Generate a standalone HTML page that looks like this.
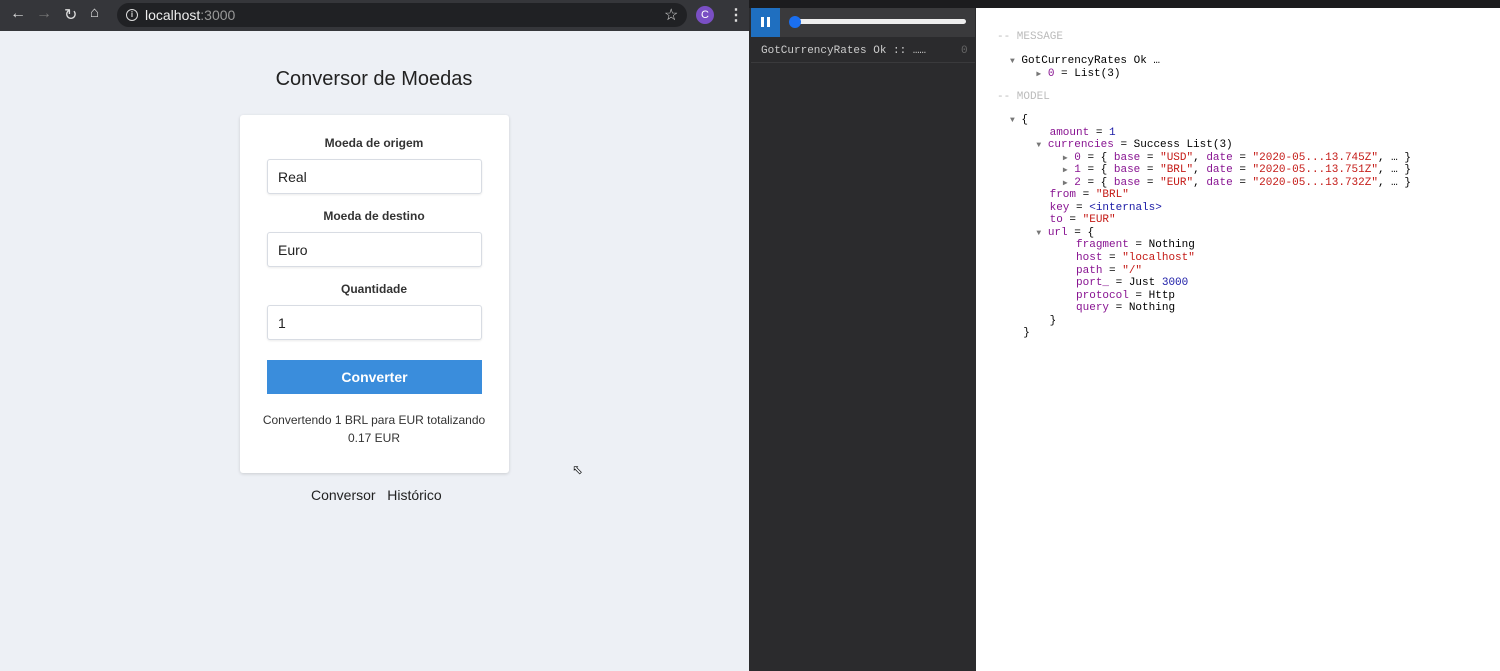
<!DOCTYPE html>
<html><head><style>
*{margin:0;padding:0;box-sizing:border-box}
body{width:1500px;height:671px;overflow:hidden;position:relative;background:#edf0f5;font-family:"Liberation Sans",sans-serif}
.abs{position:absolute}
.mono{font-family:"Liberation Mono",monospace;font-size:11px;white-space:pre}
.p{color:#881391}.r{color:#c41a16}.b{color:#1a1aa6}
.tri{color:#777;font-size:8px;display:inline-block;line-height:10px;height:10px;vertical-align:baseline}
.inp{position:absolute;left:267px;width:215px;height:35px;background:#fff;border:1px solid #d8dce3;border-radius:3px;box-shadow:0 1px 2px rgba(0,0,0,.08);font-size:14px;color:#222;padding:9px 10px}
.lbl{position:absolute;left:240px;width:268px;text-align:center;font-size:12px;font-weight:bold;color:#333}
</style></head><body>
<div class="abs" style="left:0;top:0;width:750px;height:31px;background:#35363a"></div>
<div class="abs" style="left:117px;top:3px;width:570px;height:24px;background:#202124;border-radius:12px"></div>
<div class="abs" style="left:10px;top:5px;color:#ddd;font-size:16px">&#8592;</div>
<div class="abs" style="left:36px;top:5px;color:#777;font-size:16px">&#8594;</div>
<div class="abs" style="left:64px;top:5px;color:#ddd;font-size:16px">&#8635;</div>
<div class="abs" style="left:90px;top:4px;color:#ddd;font-size:15px">&#8962;</div>
<div class="abs" style="left:126px;top:9px;width:12px;height:12px;border:1.5px solid #ddd;border-radius:50%;font-size:8px;color:#ddd;text-align:center;line-height:9px;font-weight:bold">i</div>
<div class="abs" style="left:145px;top:7px;font-size:14px;color:#eee">localhost<span style="color:#999">:3000</span></div>
<div class="abs" style="left:664px;top:5px;color:#ddd;font-size:16px">&#9734;</div>
<div class="abs" style="left:696px;top:6px;width:18px;height:18px;border-radius:50%;background:#7a4fc4;color:#fff;font-size:11px;text-align:center;line-height:18px">C</div>
<div class="abs" style="left:728px;top:5px;color:#ddd;font-size:16px;font-weight:bold">&#8942;</div>
<div class="abs" style="left:240px;top:68px;width:268px;text-align:center;font-size:20px;color:#222">Conversor de Moedas</div>
<div class="abs" style="left:240px;top:115px;width:269px;height:358px;background:#fff;border-radius:3px;box-shadow:0 1px 3px rgba(0,0,0,.15)"></div>
<div class="lbl" style="top:136px">Moeda de origem</div>
<div class="inp" style="top:159px">Real</div>
<div class="lbl" style="top:209px">Moeda de destino</div>
<div class="inp" style="top:232px">Euro</div>
<div class="lbl" style="top:282px">Quantidade</div>
<div class="inp" style="top:305px">1</div>
<div class="abs" style="left:267px;top:360px;width:215px;height:34px;background:#3a8ddc;color:#fff;font-size:14px;font-weight:bold;text-align:center;line-height:34px">Converter</div>
<div class="abs" style="left:240px;top:411px;width:268px;text-align:center;font-size:12px;color:#333;line-height:18px">Convertendo 1 BRL para EUR totalizando<br>0.17 EUR</div>
<div class="abs" style="left:311px;top:487px;font-size:14px;color:#222">Conversor&nbsp;&nbsp;&nbsp;Histórico</div>
<div class="abs" style="left:572px;top:462px;font-size:13px">&#11009;</div>
<div class="abs" style="left:749px;top:0;width:751px;height:671px;background:#2b2b2d"></div>
<div class="abs" style="left:749px;top:0;width:751px;height:8px;background:#1c1c1e"></div>
<div class="abs" style="left:751px;top:8px;width:224px;height:29px;background:#3a3a3c"></div>
<div class="abs" style="left:751px;top:8px;width:29px;height:29px;background:#1f6fc0"></div>
<div class="abs" style="left:761px;top:17px;width:3px;height:10px;background:#fff"></div>
<div class="abs" style="left:767px;top:17px;width:3px;height:10px;background:#fff"></div>
<div class="abs" style="left:790px;top:19px;width:176px;height:5px;background:#eee;border-radius:3px"></div>
<div class="abs" style="left:789px;top:16px;width:12px;height:12px;background:#1a6ff0;border-radius:50%"></div>
<div class="abs mono" style="left:761px;top:45px;color:#ccc">GotCurrencyRates Ok :: ……</div>
<div class="abs mono" style="left:961px;top:45px;color:#666">0</div>
<div class="abs" style="left:751px;top:62px;width:224px;height:1px;background:#3a3a3c"></div>
<div class="abs" style="left:976px;top:8px;width:524px;height:663px;background:#fff"></div>
<div class="abs mono" style="left:997px;top:31px;color:#bbb">-- MESSAGE</div>
<div class="abs mono" style="left:1010px;top:55px;color:#000;line-height:12.5px"><span class="tri">▼</span> GotCurrencyRates Ok …
    <span class="tri">▶</span> <span class="p">0</span> = List(3)</div>
<div class="abs mono" style="left:997px;top:91px;color:#bbb">-- MODEL</div>
<div class="abs mono" style="left:1010px;top:114px;line-height:12.55px;color:#000"><span class="tri">▼</span> {
      <span class="p">amount</span> = <span class="b">1</span>
    <span class="tri">▼</span> <span class="p">currencies</span> = Success List(3)
        <span class="tri">▶</span> <span class="p">0</span> = { <span class="p">base</span> = <span class="r">"USD"</span>, <span class="p">date</span> = <span class="r">"2020-05...13.745Z"</span>, … }
        <span class="tri">▶</span> <span class="p">1</span> = { <span class="p">base</span> = <span class="r">"BRL"</span>, <span class="p">date</span> = <span class="r">"2020-05...13.751Z"</span>, … }
        <span class="tri">▶</span> <span class="p">2</span> = { <span class="p">base</span> = <span class="r">"EUR"</span>, <span class="p">date</span> = <span class="r">"2020-05...13.732Z"</span>, … }
      <span class="p">from</span> = <span class="r">"BRL"</span>
      <span class="p">key</span> = <span class="b">&lt;internals&gt;</span>
      <span class="p">to</span> = <span class="r">"EUR"</span>
    <span class="tri">▼</span> <span class="p">url</span> = {
          <span class="p">fragment</span> = Nothing
          <span class="p">host</span> = <span class="r">"localhost"</span>
          <span class="p">path</span> = <span class="r">"/"</span>
          <span class="p">port_</span> = Just <span class="b">3000</span>
          <span class="p">protocol</span> = Http
          <span class="p">query</span> = Nothing
      }
  }</div>
</body></html>
